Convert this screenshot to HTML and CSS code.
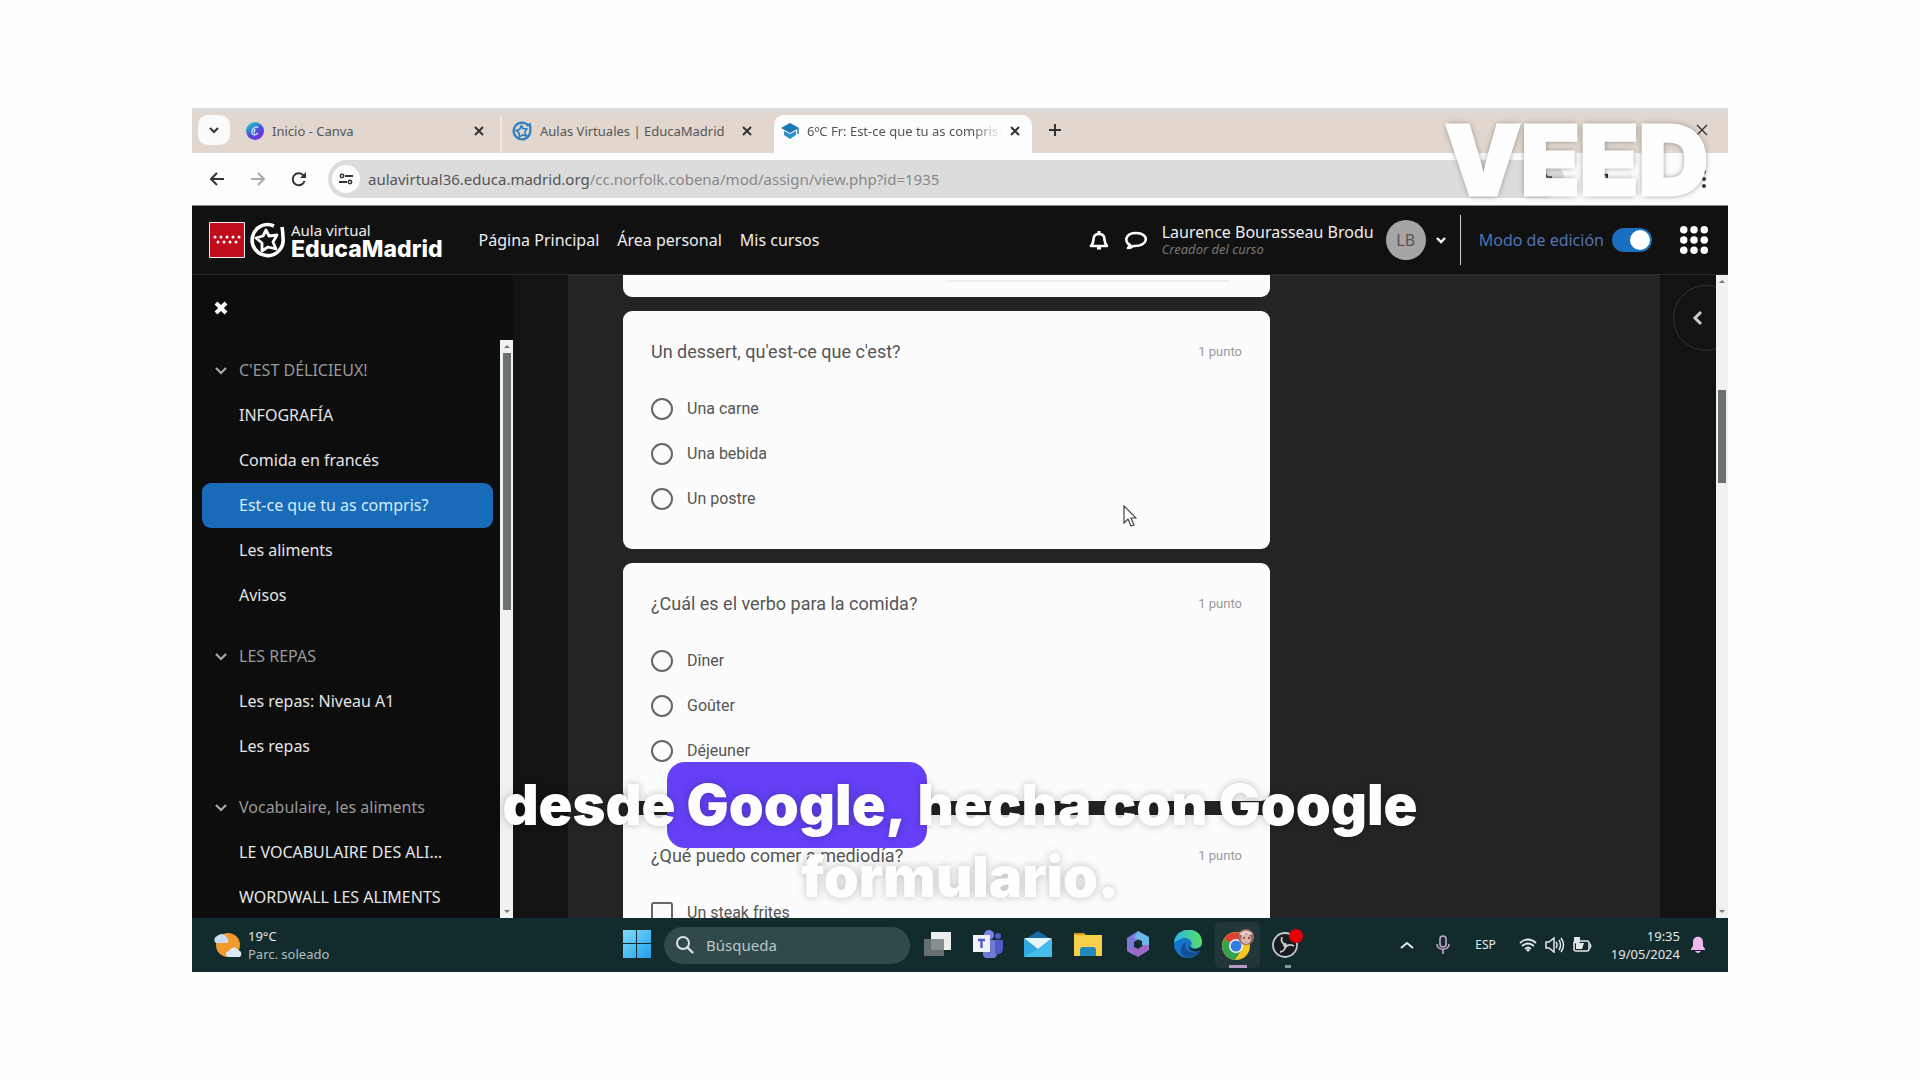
FILE: index.html
```
<!DOCTYPE html>
<html lang="es">
<head>
  <meta charset="UTF-8" />
  <meta name="viewport" content="width=device-width, initial-scale=1.0"/>
  <title>6ºC Fr: Est-ce que tu as compris?</title>
  <link rel="stylesheet" href="styles.css">
</head>
<body>

  <div class="video">

    <!-- Pestañas -->
    <div class="tabs">
      <button class="tab-search" aria-label="Buscar pestañas"><svg width="10" height="10" viewBox="0 0 10 10"><path d="M1 3l4 4 4-4" fill="none" stroke="#333" stroke-width="2"/></svg></button>
      <div class="tab tab-first">
        <svg width="18" height="18" viewBox="0 0 18 18">
          <defs><linearGradient id="canva" x1="0" y1="0" x2="0.7" y2="1"><stop offset="0.15" stop-color="#1fc4cc"/><stop offset="0.6" stop-color="#4c50d8"/><stop offset="1" stop-color="#7a2ae0"/></linearGradient></defs>
          <circle cx="9" cy="9" r="9" fill="url(#canva)"/>
          <path d="M12 6c-1-2-5-1-6 3s3 5 6 2M9 7l-1 4" fill="none" stroke="#cfe8ff" stroke-width="1.3"/>
        </svg>
        <span class="tab-title">Inicio - Canva</span>
        <button class="tab-close" aria-label="Cerrar"><svg width="10" height="10" viewBox="0 0 10 10"><path d="M1 1l8 8M9 1L1 9" stroke="#333" stroke-width="2"/></svg></button>
      </div>
      <div class="tab tab-second">
        <svg width="20" height="20" viewBox="0 0 36 36"><path d="M30 9a15 15 0 1 0 3 9c0-3 0-8-1-14" fill="none" stroke="#2c7fc2" stroke-width="4"/><path d="M17 8l3 6 7 0-4 6 3 7-7-2-6 4 0-7-6-5 7-2z" fill="none" stroke="#2c7fc2" stroke-width="3" stroke-linejoin="round"/></svg>
        <span class="tab-title">Aulas Virtuales | EducaMadrid</span>
        <button class="tab-close" aria-label="Cerrar"><svg width="10" height="10" viewBox="0 0 10 10"><path d="M1 1l8 8M9 1L1 9" stroke="#333" stroke-width="2"/></svg></button>
      </div>
      <div class="tab tab-active">
        <svg width="18" height="16" viewBox="0 0 18 16"><path d="M9 0l9 5-9 5-9-5z" fill="#1878b8"/><path d="M3 8l6 3 6-3v4l-6 4-6-4z" fill="#2b8fcc"/><path d="M17 5v6" stroke="#1878b8" stroke-width="1.5"/></svg>
        <span class="tab-title">6ºC Fr: Est-ce que tu as compris?</span>
        <button class="tab-close" aria-label="Cerrar"><svg width="10" height="10" viewBox="0 0 10 10"><path d="M1 1l8 8M9 1L1 9" stroke="#333" stroke-width="2"/></svg></button>
      </div>
      <button class="tab-new" aria-label="Nueva pestaña"><svg width="12" height="12" viewBox="0 0 12 12"><path d="M6 0v12M0 6h12" stroke="#333" stroke-width="2"/></svg></button>
      <div class="window-buttons">
        <button aria-label="Minimizar"><svg width="12" height="12" viewBox="0 0 12 12"><path d="M0 6h12" stroke="#333" stroke-width="1.4"/></svg></button>
        <button aria-label="Restaurar"><svg width="12" height="12" viewBox="0 0 12 12"><path d="M1 3h8v8H1zM4 1h6l1 1v7" fill="none" stroke="#333" stroke-width="1.4"/></svg></button>
        <button aria-label="Cerrar ventana"><svg width="12" height="12" viewBox="0 0 12 12"><path d="M1 1l10 10M11 1L1 11" stroke="#333" stroke-width="1.4"/></svg></button>
      </div>
    </div>

    <!-- Barra de direcciones -->
    <div class="toolbar">
      <button aria-label="Atrás"><svg width="14" height="14" viewBox="0 0 14 14"><path d="M14 7H2M7 1L1 7l6 6" fill="none" stroke="#333" stroke-width="2"/></svg></button>
      <button aria-label="Adelante"><svg width="14" height="14" viewBox="0 0 14 14"><path d="M0 7h12M7 1l6 6-6 6" fill="none" stroke="#aaa" stroke-width="2"/></svg></button>
      <button aria-label="Recargar"><svg width="16" height="16" viewBox="0 0 16 16"><path d="M13.500 10A6 6 0 1 1 12 4l2 2" fill="none" stroke="#333" stroke-width="2"/><path d="M15 1v6H9z" fill="#333"/></svg></button>
      <div class="address">
        <span class="site-info"><svg width="14" height="12" viewBox="0 0 14 12"><path d="M6 3h8M0 9h8" stroke="#333" stroke-width="2"/><circle cx="3" cy="3" r="1.700" fill="none" stroke="#333" stroke-width="1.500"/><circle cx="11" cy="9" r="1.700" fill="none" stroke="#333" stroke-width="1.500"/></svg></span>
        <span class="url">aulavirtual36.educa.madrid.org<span class="path">/cc.norfolk.cobena/mod/assign/view.php?id=1935</span></span>
        <svg width="14" height="16" viewBox="0 0 14 16"><path d="M7 1l2 5 5 0-4 4 1 5-4-3-4 3 1-5-4-4h5z" fill="none" stroke="#333" stroke-width="1.400"/></svg>
      </div>
      <div class="extensions">
        <svg width="16" height="16" viewBox="0 0 16 16"><path d="M1 15V4h4a3 3 0 0 1 6 0h4v11z" fill="none" stroke="#222" stroke-width="2.400"/></svg>
        <svg width="18" height="18" viewBox="0 0 18 18"><circle cx="9" cy="9" r="9" fill="#642035"/></svg>
        <svg width="4" height="18" viewBox="0 0 4 18"><g fill="#333"><circle cx="2" cy="2" r="2"/><circle cx="2" cy="9" r="2"/><circle cx="2" cy="16" r="2"/></g></svg>
      </div>
    </div>

    <!-- Cabecera del aula virtual -->
    <header class="navbar">
      <a class="brand" href="#">
        <svg width="36" height="36" viewBox="0 0 36 36"><path d="M.5.5h35v35H.5z" fill="#c00d1b" stroke="#eee"/><g fill="#fff"><circle cx="6" cy="15" r="1.500"/><circle cx="12" cy="15" r="1.500"/><circle cx="18" cy="15" r="1.500"/><circle cx="24" cy="15" r="1.500"/><circle cx="30" cy="15" r="1.500"/><circle cx="9" cy="20" r="1.500"/><circle cx="15" cy="20" r="1.500"/><circle cx="21" cy="20" r="1.500"/><circle cx="27" cy="20" r="1.500"/></g></svg>
        <svg width="38" height="36" viewBox="0 0 38 36"><path d="M25 4a15.500 15.500 0 1 0 9 12c0-4 0-6-1-11" fill="none" stroke="#fff" stroke-width="3.600"/><path d="M17 8l3 6 8-1-4 7 3 7-8-2-6 4 0-8-6-5 7-2z" fill="none" stroke="#fff" stroke-width="2.800" stroke-linejoin="round"/></svg>
        <span class="brand-text"><span>Aula virtual</span><b>EducaMadrid</b></span>
      </a>
      <nav>
        <a href="#">Página Principal</a>
        <a href="#">Área personal</a>
        <a href="#">Mis cursos</a>
      </nav>
      <div class="user-area">
        <button aria-label="Notificaciones"><svg width="20" height="20" viewBox="0 0 20 20"><path d="M2 16h16c-3-3-2-6-3-9-1-4-9-4-10 0-1 3 0 6-3 9z" fill="none" stroke="#fff" stroke-width="2.600" stroke-linejoin="round"/><path d="M10 1v3M8 18h4" stroke="#fff" stroke-width="3"/></svg></button>
        <button aria-label="Mensajes"><svg width="22" height="20" viewBox="0 0 22 20"><path d="M11 3c-11 0-12 9-6 12 0 1-1 2-2 3 2 0 4-1 5-2 16 1 17-13 3-13z" fill="none" stroke="#fff" stroke-width="2.600" stroke-linejoin="round"/></svg></button>
        <div class="user"><span class="user-name">Laurence Bourasseau Brodu</span><em>Creador del curso</em></div>
        <span class="avatar">LB</span>
        <svg class="user-caret" width="10" height="8" viewBox="0 0 10 8"><path d="M1 2l4 4 4-4" fill="none" stroke="#fff" stroke-width="2.400"/></svg>
        <label class="edit-mode">Modo de edición <input type="checkbox" role="switch" checked /></label>
        <button class="apps" aria-label="Aplicaciones"><svg width="28" height="28" viewBox="0 0 30 30"><g fill="#fff"><circle cx="4" cy="4" r="4"/><circle cx="15" cy="4" r="4"/><circle cx="26" cy="4" r="4"/><circle cx="4" cy="15" r="4"/><circle cx="15" cy="15" r="4"/><circle cx="26" cy="15" r="4"/><circle cx="4" cy="26" r="4"/><circle cx="15" cy="26" r="4"/><circle cx="26" cy="26" r="4"/></g></svg></button>
      </div>
    </header>

    <div class="page">
      <aside class="sidebar">
        <button class="sidebar-close" aria-label="Cerrar índice"><svg width="14" height="14" viewBox="0 0 14 14"><path d="M2 2l10 10M12 2L2 12" stroke="#fff" stroke-width="4"/></svg></button>
        <div class="index">
          <div class="index-list">
            <section>
              <h3><svg width="12" height="9" viewBox="0 0 12 9"><path d="M1 2l5 5 5-5" fill="none" stroke="#aaa" stroke-width="2.200"/></svg>C'EST DÉLICIEUX!</h3>
              <a href="#">INFOGRAFÍA</a>
              <a href="#">Comida en francés</a>
              <a href="#" class="current">Est-ce que tu as compris?</a>
              <a href="#">Les aliments</a>
              <a href="#">Avisos</a>
            </section>
            <section>
              <h3><svg width="12" height="9" viewBox="0 0 12 9"><path d="M1 2l5 5 5-5" fill="none" stroke="#aaa" stroke-width="2.200"/></svg>LES REPAS</h3>
              <a href="#">Les repas: Niveau A1</a>
              <a href="#">Les repas</a>
            </section>
            <section>
              <h3><svg width="12" height="9" viewBox="0 0 12 9"><path d="M1 2l5 5 5-5" fill="none" stroke="#aaa" stroke-width="2.200"/></svg>Vocabulaire, les aliments</h3>
              <a href="#">LE VOCABULAIRE DES ALIMENTS</a>
              <a href="#">WORDWALL LES ALIMENTS</a>
            </section>
          </div>
          <div class="scrollbar index-scroll"><i class="up"></i><i class="thumb"></i><i class="down"></i></div>
        </div>
      </aside>

      <main>
        <form class="questions">
          <div class="card card-end"><hr></div>
          <fieldset class="card">
            <div class="question"><span>Un dessert, qu'est-ce que c'est?</span><small>1 punto</small></div>
            <label><input type="radio" name="dessert" />Una carne</label>
            <label><input type="radio" name="dessert" />Una bebida</label>
            <label><input type="radio" name="dessert" />Un postre</label>
          </fieldset>
          <fieldset class="card">
            <div class="question"><span>¿Cuál es el verbo para la comida?</span><small>1 punto</small></div>
            <label><input type="radio" name="verbo" />Dîner</label>
            <label><input type="radio" name="verbo" />Goûter</label>
            <label><input type="radio" name="verbo" />Déjeuner</label>
          </fieldset>
          <fieldset class="card">
            <div class="question"><span>¿Qué puedo comer a mediodía?</span><small>1 punto</small></div>
            <label><input type="checkbox" name="mediodia" />Un steak frites</label>
          </fieldset>
        </form>
      </main>

      <div class="drawer">
        <button aria-label="Abrir bloques"><svg width="12" height="16" viewBox="0 0 12 16"><path d="M10 2L4 8l6 6" fill="none" stroke="#ccc" stroke-width="3"/></svg></button>
      </div>
      <div class="scrollbar page-scroll"><i class="up"></i><i class="thumb"></i><i class="down"></i></div>
    </div>

    <!-- Barra de tareas -->
    <footer class="taskbar">
      <div class="weather">
        <svg width="28" height="26" viewBox="0 0 28 26"><circle cx="14" cy="13" r="12" fill="#f39a2d"/><path d="M2 11a4 4 0 0 1 1-7 6 6 0 0 1 10 2 3 3 0 0 1 0 5z" fill="#c8dcf2"/><path d="M15 25a3 3 0 0 1 0-6 5 5 0 0 1 9-1 4 4 0 0 1 2 7z" fill="#dce8f6"/></svg>
        <div>19°C<br><span>Parc. soleado</span></div>
      </div>
      <div class="apps-bar">
        <button aria-label="Inicio"><svg width="28" height="28" viewBox="0 0 28 28"><defs><linearGradient id="win" x1="0" y1="0" x2="1" y2="1"><stop offset="0" stop-color="#7fdcf7"/><stop offset="1" stop-color="#1f9fee"/></linearGradient></defs><path d="M0 0h13v13H0zM14 0h14v13H14zM0 14h13v14H0zM14 14h14v14H14z" fill="url(#win)"/></svg></button>
        <label class="search"><svg width="18" height="18" viewBox="0 0 18 18"><circle cx="7" cy="7" r="6" fill="none" stroke="#dce3e3" stroke-width="2"/><path d="M11 11l6 6" stroke="#dce3e3" stroke-width="2.400"/></svg><input type="text" placeholder="Búsqueda" aria-label="Búsqueda" /></label>
        <button aria-label="Vista de tareas"><svg width="28" height="26" viewBox="0 0 28 26"><path d="M7 1h20v18H7z" fill="#eceeee"/><path d="M0 8h20v17H0z" fill="#777d7d" opacity=".85"/></svg></button>
        <button aria-label="Teams"><svg width="30" height="28" viewBox="0 0 30 28"><circle cx="16" cy="5" r="5" fill="#7b83eb"/><circle cx="25" cy="6" r="3" fill="#5059c9"/><path d="M10 10h14v9a7 7 0 0 1-14 6z" fill="#7078d8"/><path d="M22 10h8v9a5 5 0 0 1-8 4z" fill="#5059c9"/><path d="M0 5h17v17H0z" fill="#f1f1fa"/><path d="M5 10h7M8.500 10v8" stroke="#5059c9" stroke-width="2.400"/></svg></button>
        <button aria-label="Correo"><svg width="28" height="26" viewBox="0 0 28 26"><path d="M0 9L14 0l14 9z" fill="#1668a5"/><path d="M0 8h28v18H0z" fill="#30a9df"/><path d="M0 7h28L14 18z" fill="#e6f5fc"/><path d="M14 18L28 8v18H0z" fill="#4fc4ed" opacity=".7"/></svg></button>
        <button aria-label="Explorador de archivos"><svg width="28" height="26" viewBox="0 0 28 26"><path d="M0 2h10l3 3h-13z" fill="#d79b20"/><path d="M0 4h28v21H0z" fill="#f7cf4b"/><path d="M6 25v-6q0-3 3-3h10q3 0 3 3v6z" fill="#2489bf"/></svg></button>
        <button aria-label="Microsoft 365"><svg width="28" height="28" viewBox="0 0 28 28"><path d="M14 1L3 8v13l7 4V12l8-5z" fill="#7f78dc"/><path d="M14 1l11 6v12l-7-4V11l-8-3z" fill="#6fb6ea"/><path d="M25 15v5l-11 7-11-6 7-4 4 2 6-4z" fill="#9a6cc8"/></svg></button>
        <button aria-label="Edge"><svg width="28" height="28" viewBox="0 0 28 28"><defs><linearGradient id="edge" x1="0" y1="0" x2="1" y2="0"><stop offset="0" stop-color="#2bb4e4"/><stop offset="1" stop-color="#58df64"/></linearGradient></defs><circle cx="14" cy="14" r="14" fill="#1673ca"/><path d="M0 13C1-4 28-5 28 12c0 7-10 8-11 4 3-5-5-11-12-6-3 1-5 2-5 3z" fill="url(#edge)"/><path d="M12 12c-3 9 7 13 14 9-7 11-24 6-18-5 1-2 3-3 4-4z" fill="#124f95"/><path d="M15 13a4 4 0 0 0 2 5c4 2 7 1 11-2v4c-5 3-16 2-13-7z" fill="#122c2e"/></svg></button>
        <button class="open" aria-label="Chrome"><svg width="34" height="32" viewBox="0 0 34 32"><circle cx="15" cy="18" r="14" fill="#f4c61f"/><path d="M15 18L3 11A14 14 0 0 1 27 11z" fill="#df3e30"/><path d="M15 18L3 11a14 14 0 0 0 11 21l7-11z" fill="#35a253"/><circle cx="15" cy="18" r="7" fill="#f5f5f5"/><circle cx="15" cy="18" r="5.500" fill="#347de0"/><circle cx="25" cy="9" r="8" fill="#a0685f"/><circle cx="25" cy="11" r="5" fill="#dcb5ab"/><path d="M18 6q7-7 14 0l-4 1-3-2-3 3z" fill="#e5d2cd"/><path d="M22 10h2M27 10h2" stroke="#6b332c" stroke-width="1.500"/></svg></button>
        <button class="running" aria-label="OBS Studio"><svg width="32" height="30" viewBox="0 0 32 30"><circle cx="13" cy="16" r="12" fill="#171b20" stroke="#c5c9c9" stroke-width="1.800"/><path d="M10 8q-2 6 4 8M22 17q-6-3-9 2M8 23q6-1 5-7" fill="none" stroke="#c5c9c9" stroke-width="1.800"/><circle cx="13" cy="16" r="2" fill="#c5c9c9"/><circle cx="24" cy="7" r="7" fill="#e60000"/></svg></button>
      </div>
      <div class="tray">
        <svg width="14" height="8" viewBox="0 0 14 8"><path d="M1 7l6-5 6 5" fill="none" stroke="#e4e8e8" stroke-width="2"/></svg>
        <svg width="14" height="20" viewBox="0 0 14 20"><rect x="4" y="1" width="6" height="11" rx="3" fill="none" stroke="#c9a8c9" stroke-width="1.600"/><path d="M1 9c0 7 12 7 12 0M7 14v5" fill="none" stroke="#c9a8c9" stroke-width="1.600"/></svg>
        <span class="lang">ESP</span>
        <div class="status">
          <svg width="18" height="14" viewBox="0 0 18 14"><path d="M1 5q8-7 16 0M3 8q6-5 12 0M6 11q3-3 6 0" fill="none" stroke="#e4e8e8" stroke-width="1.700"/><circle cx="9" cy="12" r="1.600" fill="#e4e8e8"/></svg>
          <svg width="20" height="16" viewBox="0 0 20 16"><path d="M1 5h3l5-4v14l-5-4H1zM11 5q2 3 0 6M14 3q3 5 0 10M16 1q5 7 0 14" fill="none" stroke="#e4e8e8" stroke-width="1.500"/></svg>
          <svg width="20" height="16" viewBox="0 0 20 16"><rect x="1" y="4" width="15" height="10" rx="2" fill="none" stroke="#e4e8e8" stroke-width="1.600"/><path d="M3 6h8l-2 6H3zM17 6q3 3 0 6zM1 0h6v5q-3 4-6 0z" fill="#e4e8e8"/></svg>
        </div>
        <div class="clock">19:35<br>19/05/2024</div>
        <svg width="16" height="18" viewBox="0 0 16 18"><path d="M1 13l2-3V6c0-7 10-7 10 0v4l2 3v1H1zM5 15h6q-3 4-6 0z" fill="#efb9ee"/></svg>
      </div>
    </footer>

    <svg class="cursor" width="14" height="22" viewBox="0 0 14 22"><path d="M1 1v17l4-4 3 7 3-1-3-7h5z" fill="#fff" stroke="#444" stroke-width="1.200"/></svg>
    <div class="watermark">VEED</div>
    <div class="subtitles">
      <p><span>desde</span><mark>Google,</mark><span>hecha</span><span>con</span><span>Google</span></p>
      <p><span>formulario.</span></p>
    </div>
  </div>

</body>
</html>
```

FILE: styles.css
```
* {
  box-sizing: border-box;
}

body {
  margin: 0;
  min-height: 100vh;
  display: flex;
  justify-content: center;
  align-items: center;
  background: #fefefe;
  font-family: "Noto Sans", sans-serif;
  font-size: 16px;
}

button {
  display: flex;
  align-items: center;
  justify-content: center;
  padding: 0;
  border: none;
  background: none;
  cursor: pointer;
}

a {
  color: inherit;
  text-decoration: none;
}

svg {
  flex-shrink: 0;
}

.video {
  position: relative;
  width: 80%;
  aspect-ratio: 16 / 9;
  display: flex;
  flex-direction: column;
  overflow: hidden;
}

/* pestañas */
.tabs {
  display: flex;
  align-items: flex-end;
  height: 45px;
  flex-shrink: 0;
  padding-left: 6px;
  background: linear-gradient(#dad9d8, #e1d7ce 20%);
  font-size: 13px;
  color: #555;
}

.tab-search {
  width: 32px;
  height: 30px;
  margin-bottom: 8px;
  border-radius: 10px;
  background: #fbfbfb;
}

.tab {
  display: flex;
  align-items: center;
  gap: 8px;
  height: 38px;
  padding: 0 16px 6px;
}

.tab-title {
  flex: 1;
  overflow: hidden;
  white-space: nowrap;
}

.tab-first {
  width: 272px;
  border-right: 2px solid #efe9e4;
}

.tab-second {
  width: 272px;
  padding-left: 10px;
  padding-right: 22px;
}

.tab-active {
  width: 258px;
  padding-left: 7px;
  padding-right: 12px;
  background: #fdfdfd;
  border-radius: 10px 10px 0 0;
}

.tab-active .tab-title {
  mask-image: linear-gradient(to right, #000 85%, transparent);
}

.tab-new {
  width: 46px;
  height: 30px;
  margin-bottom: 8px;
}

.window-buttons {
  display: flex;
  margin-left: auto;
  margin-bottom: 8px;
}

.window-buttons button {
  width: 52px;
  height: 30px;
}

/* barra de direcciones */
.toolbar {
  display: flex;
  align-items: center;
  height: 53px;
  flex-shrink: 0;
  padding: 0 22px 0 4px;
  background: #fdfdfd;
  border-bottom: 1px solid #888;
}

.toolbar button {
  width: 41px;
  height: 40px;
}

.address {
  display: flex;
  align-items: center;
  flex: 1;
  height: 38px;
  margin: 0 28px 0 9px;
  padding: 0 12px 0 4px;
  border-radius: 20px;
  background: #dcdcdc;
}

.site-info {
  display: flex;
  align-items: center;
  justify-content: center;
  width: 28px;
  height: 28px;
  border-radius: 50%;
  background: #fdfdfd;
}

.url {
  flex: 1;
  margin-left: 8px;
  font-size: 15px;
  color: #555;
}

.path {
  color: #888;
}

.extensions {
  display: flex;
  align-items: center;
  gap: 38px;
}

/* cabecera */
.navbar {
  display: flex;
  align-items: center;
  height: 69px;
  flex-shrink: 0;
  padding: 0 20px 0 17px;
  background: #111;
  border-bottom: 1px solid #2a2a2a;
  color: #eee;
}

.brand {
  display: flex;
  align-items: center;
  gap: 4px;
}

.brand-text {
  display: flex;
  flex-direction: column;
  font-size: 15px;
  line-height: 19px;
}

.brand-text b {
  font-family: Inter, sans-serif;
  font-size: 23px;
  font-weight: 800;
  color: #fff;
}

nav {
  display: flex;
  gap: 18px;
  margin-left: 36px;
}

.user-area {
  display: flex;
  align-items: center;
  margin-left: auto;
}

.user-area button + button {
  margin-left: 16px;
}

.user {
  display: flex;
  flex-direction: column;
  margin: 0 12px 0 15px;
  padding-top: 2px;
  line-height: 17px;
}

.user em {
  font-size: 13px;
  color: #777;
}

.avatar {
  display: flex;
  align-items: center;
  justify-content: center;
  width: 40px;
  height: 40px;
  border-radius: 50%;
  background: #a5a5a5;
  color: #555;
}

.user-caret {
  margin: 0 14px 0 10px;
}

.edit-mode {
  display: flex;
  align-items: center;
  gap: 8px;
  height: 50px;
  padding-left: 18px;
  border-left: 1px solid #ccc;
  color: #5273b4;
}

.edit-mode input {
  appearance: none;
  display: flex;
  justify-content: flex-end;
  width: 40px;
  height: 24px;
  margin: 0;
  padding: 2px;
  border-radius: 12px;
  background: #1a6fc0;
}

.edit-mode input::before {
  content: "";
  width: 20px;
  height: 20px;
  border-radius: 50%;
  background: #fff;
}

.apps {
  margin-left: 28px;
}

/* cuerpo de la página */
.page {
  display: flex;
  flex: 1;
  min-height: 0;
  background: #131313;
}

.sidebar {
  display: flex;
  flex-direction: column;
  width: 321px;
  flex-shrink: 0;
  background: #0d0d0d;
}

.sidebar-close {
  width: 58px;
  height: 65px;
  flex-shrink: 0;
}

.index {
  display: flex;
  flex: 1;
  min-height: 0;
  color: #e4e4e4;
}

.index-list {
  flex: 1;
  min-width: 0;
  padding: 7px 7px 0 10px;
  overflow: hidden;
}

.index section {
  margin-bottom: 15px;
}

.index h3 {
  display: flex;
  align-items: center;
  gap: 18px;
  height: 46px;
  margin: 0;
  padding-left: 13px;
  font-size: 16px;
  font-weight: 400;
  color: #999;
}

.index h3 svg {
  margin-right: -6px;
}

.index a {
  display: block;
  padding: 0 40px 0 37px;
  border-radius: 9px;
  line-height: 45px;
  overflow: hidden;
  text-overflow: ellipsis;
  white-space: nowrap;
}

.index .current {
  background: #176bb9;
  color: #d9ecff;
}

.scrollbar {
  display: flex;
  flex-direction: column;
  width: 12px;
  flex-shrink: 0;
  background: #f0f2f2;
}

.scrollbar i {
  display: block;
}

.up,
.down {
  width: 6px;
  margin: 5px auto;
  border: 3px solid transparent;
}

.up {
  border-top: 0;
  border-bottom-color: #777;
}

.down {
  margin-top: auto;
  border-bottom: 0;
  border-top-color: #777;
}

.thumb {
  width: 8px;
  margin: 0 auto;
  background: #6d7072;
}

.index-scroll {
  width: 13px;
}

.index-scroll .thumb {
  height: 257px;
}

.page-scroll .thumb {
  height: 93px;
  margin-top: 102px;
}

main {
  flex: 1;
  margin-left: 55px;
  padding: 0 55px;
  overflow: hidden;
  background: #242424;
}

.questions {
  display: flex;
  flex-direction: column;
  gap: 14px;
  max-width: 647px;
  font-family: Roboto, sans-serif;
  font-size: 16px;
  color: #555;
}

.card {
  margin: 0;
  padding: 28px;
  border: none;
  border-radius: 9px;
  background: #fcfcfc;
}

.card-end {
  padding: 5px 40px 15px;
  border-radius: 0 0 9px 9px;
}

.card-end hr {
  width: 50%;
  margin: 0 0 0 auto;
  border: none;
  border-top: 2px solid #f1eff1;
}

.question {
  display: flex;
  justify-content: space-between;
  align-items: center;
  margin-bottom: 22px;
  font-size: 18px;
  line-height: 25px;
}

.question small {
  font-size: 13px;
  color: #999;
}

.card label {
  display: flex;
  align-items: center;
  gap: 14px;
  height: 45px;
}

.card input {
  appearance: none;
  width: 22px;
  height: 22px;
  margin: 0;
  border: 2px solid #666;
}

.card input[type="radio"] {
  border-radius: 50%;
}

.card input[type="checkbox"] {
  border-radius: 3px;
}

.drawer {
  width: 56px;
  padding-top: 10px;
  overflow: hidden;
}

.drawer button {
  width: 66px;
  height: 66px;
  margin-left: 13px;
  padding-right: 18px;
  border: 1px solid #333;
  border-radius: 50%;
}

/* barra de tareas */
.taskbar {
  display: grid;
  grid-template-columns: 1fr auto 1fr;
  align-items: center;
  height: 54px;
  flex-shrink: 0;
  padding: 0 22px;
  background: #122c2e;
  color: #e4e8e8;
  font-size: 13px;
  line-height: 18px;
}

.weather,
.tray,
.status {
  display: flex;
  align-items: center;
}

.weather {
  gap: 6px;
}

.weather span {
  color: #b5bfc0;
}

.apps-bar {
  display: flex;
  align-items: center;
  gap: 5px;
  padding-left: 4px;
}

.apps-bar button {
  width: 45px;
  height: 46px;
  border-radius: 5px;
  border-bottom: 3px solid transparent;
}

.apps-bar .open {
  background: linear-gradient(#b49ac0, #b49ac0) center bottom / 18px 3px no-repeat border-box, #203638;
}

.apps-bar .running {
  background: linear-gradient(#839597, #839597) center bottom / 6px 3px no-repeat border-box;
}

.search {
  display: flex;
  align-items: center;
  gap: 10px;
  width: 246px;
  height: 37px;
  padding: 0 12px;
  border-radius: 19px;
  background: #30494b;
}

.search input {
  width: 100%;
  border: none;
  outline: none;
  background: none;
  font-family: inherit;
  font-size: 15px;
}

.search input::placeholder {
  color: #b9c6c6;
}

.tray {
  justify-content: flex-end;
}

.lang {
  margin: 0 23px 0 25px;
  font-size: 12px;
}

.tray svg + svg {
  margin-left: 22px;
}

.tray .status svg + svg {
  margin-left: 8px;
}

.clock {
  margin: 0 10px 0 18px;
  text-align: right;
}

/* capas encima del vídeo */
.cursor {
  position: absolute;
  left: 931px;
  top: 397px;
}

.watermark {
  position: absolute;
  top: 8px;
  right: 20px;
  font-family: Inter, sans-serif;
  font-size: 96px;
  font-weight: 900;
  line-height: 88px;
  color: #fefefe;
  -webkit-text-stroke: 3px #fefefe;
  text-shadow: 0 0 6px #666;
}

.subtitles {
  position: absolute;
  left: 0;
  right: 0;
  bottom: 59px;
  font-family: Inter, sans-serif;
  font-size: 56px;
  font-weight: 900;
  line-height: 72px;
  color: #fefefe;
  text-shadow: 0 0 8px rgba(0, 0, 0, 0.25);
}

.subtitles p {
  display: flex;
  justify-content: center;
  gap: 11px;
  margin: 0;
}

.subtitles span {
  position: relative;
  z-index: 1;
}

.subtitles mark {
  margin: -7px -20px;
  padding: 7px 20px;
  border-radius: 18px;
  background: #6540f7;
  color: #fefefe;
}
```
